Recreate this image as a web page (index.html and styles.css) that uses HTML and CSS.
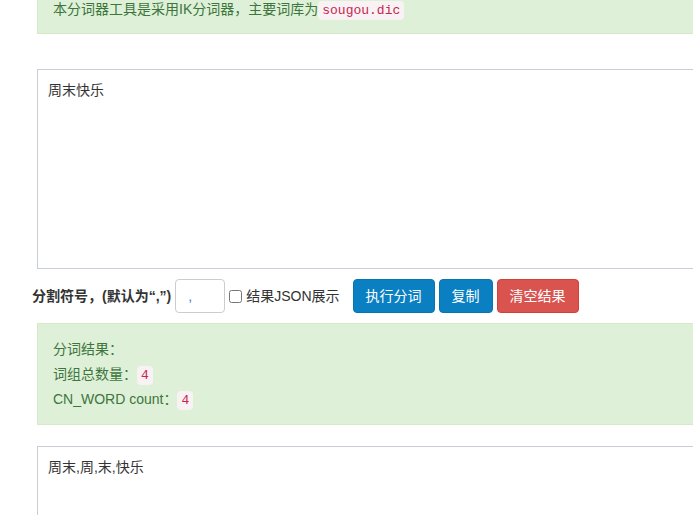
FILE: index.html
```html
<!DOCTYPE html>
<html lang="zh-CN">
<head>
<meta charset="utf-8">
<title>IK分词</title>
<link rel="stylesheet" href="styles.css">
</head>
<body>
<div class="page">
  <div class="alert alert-top">本分词器工具是采用IK分词器，主要词库为<code>sougou.dic</code></div>
  <textarea class="text-area input-area">周末快乐</textarea>
  <div class="controls">
    <label class="sep-label">分割符号，(默认为“,”)</label>
    <input class="sep-input" type="text" value=",">
    <label class="json-check"><input type="checkbox" class="check">结果JSON展示</label>
    <div class="buttons">
      <button class="btn btn-primary">执行分词</button>
      <button class="btn btn-primary">复制</button>
      <button class="btn btn-danger">清空结果</button>
    </div>
  </div>
  <div class="alert alert-result">
    <div class="line">分词结果：</div>
    <div class="line">词组总数量：<code>4</code></div>
    <div class="line">CN_WORD count：<code>4</code></div>
  </div>
  <textarea class="text-area output-area">周末,周,末,快乐</textarea>
</div>
</body>
</html>
```

FILE: styles.css
```css
html, body {
  margin: 0;
  padding: 0;
  overflow: hidden;
  background: #fff;
}
body {
  font-family: "Liberation Sans", "Noto Sans CJK SC", sans-serif;
  font-size: 14px;
  line-height: 20px;
  color: #333;
}
.page {
  width: 720px;
  padding-left: 32px;
  display: flex;
  flex-direction: column;
  align-items: flex-start;
}
.alert {
  box-sizing: border-box;
  width: 700px;
  margin-left: 5px;
  background: #dff0d8;
  border: 1px solid #d6e9c6;
  color: #3c763d;
  padding: 0 15px;
}
.alert-top {
  margin-top: -19px;
  padding-top: 17px;
  padding-bottom: 12px;
}
code {
  font-family: "Liberation Mono", "DejaVu Sans Mono", monospace;
  font-size: 13px;
  color: #c7254e;
  background: #f9f2f4;
  padding: 2px 4px;
  border-radius: 4px;
}
.text-area {
  box-sizing: border-box;
  display: block;
  width: 700px;
  margin-left: 5px;
  border: 1px solid #c8cdd6;
  border-radius: 0;
  padding: 10px 10px;
  font-family: "Liberation Sans", "Noto Sans CJK SC", sans-serif;
  font-size: 14px;
  line-height: 20px;
  color: #333;
  resize: none;
  outline: none;
}
.input-area {
  margin-top: 35px;
  height: 200px;
}
.controls {
  margin-top: 10px;
  display: flex;
  align-items: center;
  height: 34px;
}
.sep-label {
  font-weight: bold;
  margin-right: 4px;
}
.sep-input {
  box-sizing: border-box;
  width: 50px;
  height: 34px;
  border: 1px solid #ccc;
  border-radius: 4px;
  padding: 6px 12px;
  font-size: 14px;
  color: #3a7ecb;
  font-family: "Liberation Sans", sans-serif;
  outline: none;
}
.json-check {
  display: flex;
  align-items: center;
  margin-left: 4px;
}
.check {
  width: 13px;
  height: 13px;
  margin: 0 4px 0 0;
}
.buttons {
  display: flex;
  gap: 4px;
  margin-left: 13px;
}
.btn {
  height: 34px;
  padding: 6px 12px;
  font-family: "Liberation Sans", "Noto Sans CJK SC", sans-serif;
  font-size: 14px;
  line-height: 20px;
  color: #fff;
  border: 1px solid transparent;
  border-radius: 4px;
  cursor: pointer;
}
.btn-primary {
  background: #0a80c2;
  border-color: #0874b0;
}
.btn-danger {
  background: #d9534f;
  border-color: #d43f3a;
}
.alert-result {
  margin-top: 10px;
  padding-top: 15px;
  padding-bottom: 10px;
}
.alert-result .line {
  height: 25px;
  line-height: 20px;
}
.output-area {
  margin-top: 21px;
  height: 120px;
}
```
